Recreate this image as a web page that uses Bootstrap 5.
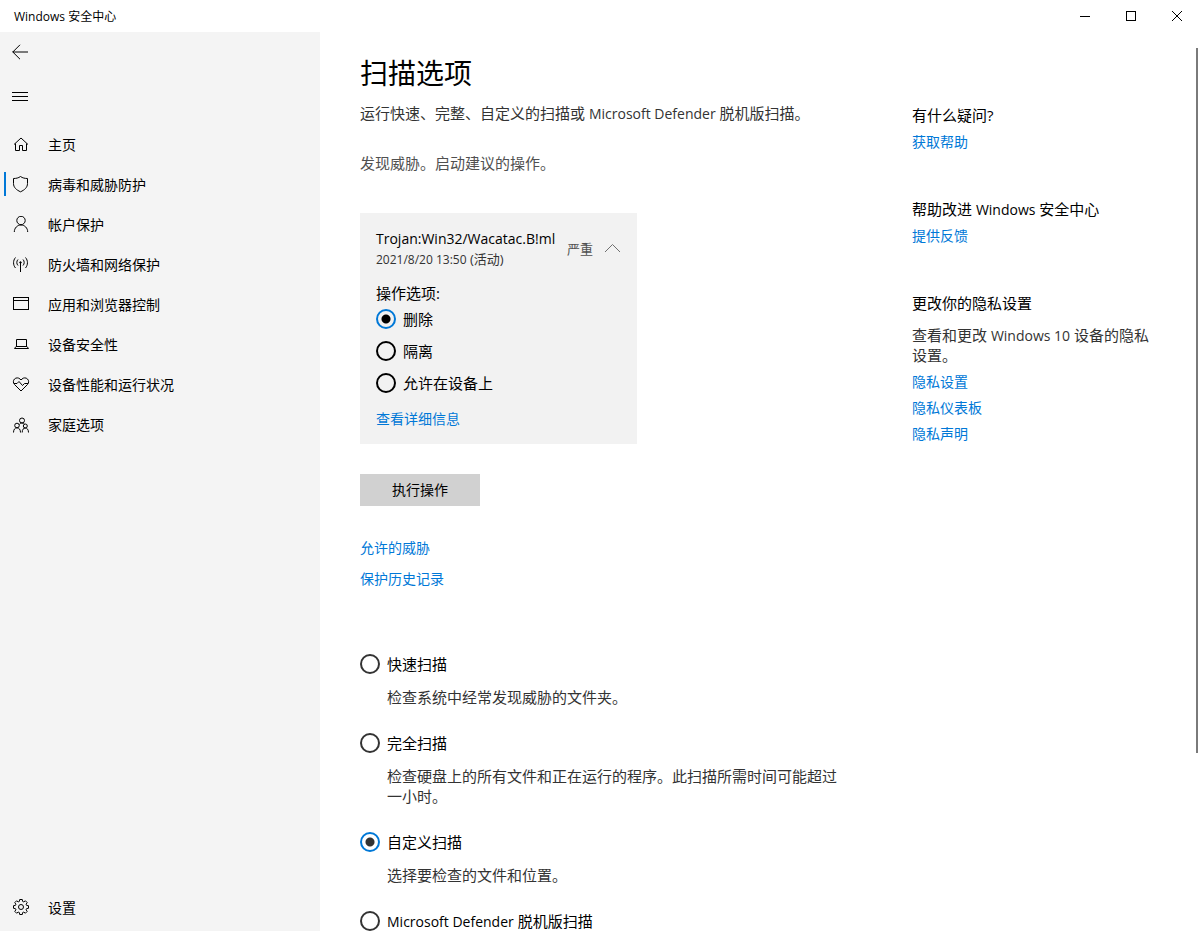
<!DOCTYPE html>
<html lang="zh-CN">
<head>
<meta charset="utf-8">
<meta name="viewport" content="width=device-width, initial-scale=1">
<title>Windows 安全中心</title>
<link rel="stylesheet" href="https://cdn.jsdelivr.net/npm/bootstrap@5.3.0/dist/css/bootstrap.min.css">
<style>
  body { font-family: "Open Sans", "Noto Sans CJK SC", sans-serif; font-size: 15px; line-height: 20px; color: #000; background: #fff; }
  a { color: #0078d7; text-decoration: none; font-size: 14px; }
  svg { fill: none; stroke: currentColor; stroke-width: 1; flex: none; }
  .latin { font-size: 14px; }
  span.latin { line-height: 1; }
  .titlebar { height: 32px; font-size: 12px; padding-left: 14px; }
  .titlebar span { padding-top: 2px; }
  .win-btn { width: 46px; height: 32px; border: 0; background: none; padding: 0; }
  .win-btn svg { display: block; margin: 0 auto; }
  .side { width: 320px; background: #f4f4f4; }
  .side nav { padding-top: 9px; }
  .tool-btn { width: 40px; height: 40px; border: 0; background: none; padding: 0 0 0 12px; display: flex; align-items: center; color: #000; }
  .side .nav-link { height: 40px; padding: 0 0 0 4px; color: #000; display: flex; align-items: center; font-size: 14px; }
  .side .nav-link::before { content: ""; width: 2px; height: 24px; margin-right: 6px; margin-top: -2px; }
  .side .nav-link.active::before { background: #0078d7; }
  .side .nav-link svg { margin-right: 18px; }
  .side .nav-link:last-child { margin-bottom: 3px; }
  .page { padding: 23px 40px 0; }
  .page h1 { font-size: 28px; line-height: 36px; font-weight: 400; }
  .page h2 { font-size: 15px; line-height: 20px; font-weight: 400; margin: 0; }
  .intro { max-width: 490px; }
  .found { margin: 30px 0 0; }
  .help { width: 248px; padding-top: 50px; }
  .help section { margin-bottom: 47px; }
  .help a { display: block; margin-top: 6px; }
  .help h2 + a, .help p + a { margin-top: 7px; }
  .soft { color: #333; }
  .softer { color: #505050; }
  .threat { width: 277px; padding: 16px 16px 15px; background: #f2f2f2; margin-top: 40px; }
  .threat svg { stroke: #707070; }
  .when { font-size: 13px; white-space: nowrap; }
  .when .latin { font-size: 12px; }
  .choose { margin: 14px 0 6px; }
  .form-check-input { width: 20px; height: 20px; margin: 0; border: 2px solid #333; background-color: transparent; flex: none; }
  .form-check-input:checked { background-color: transparent; border-color: #0078d7; background-image: radial-gradient(circle, #333 4px, transparent 5px); }
  .threat .form-check-input { border-color: #000; }
  .threat .form-check-input:checked { border-color: #0078d7; background-image: radial-gradient(circle, #000 4px, transparent 5px); }
  .pick { display: flex; align-items: center; gap: 7px; }
  .threat .pick + .pick { margin-top: 12px; }
  .run-btn { width: 120px; height: 32px; border-radius: 0; border: 0; background: #d1d1d1; font-size: 14px; line-height: 20px; padding: 0; margin-top: 30px; color: #000; }
  .more { gap: 11px; margin: 32px 0 65px; }
  .scan { margin-bottom: 26px; }
  .scan p { margin: 13px 0 0 27px; color: #333; }
  .thumb { top: 16px; right: 2px; width: 2px; height: 78.4%; background: #7a7a7a; }
</style>
</head>
<body>
<div class="d-flex flex-column vh-100 overflow-hidden">
  <header class="titlebar d-flex align-items-center">
    <span class="me-auto">Windows 安全中心</span>
    <button class="win-btn" aria-label="最小化"><svg width="12" height="12" shape-rendering="crispEdges"><path d="M1 6.5h10"/></svg></button>
    <button class="win-btn" aria-label="最大化"><svg width="12" height="12" shape-rendering="crispEdges"><path d="M1.5 1.5h9v9h-9z"/></svg></button>
    <button class="win-btn" aria-label="关闭"><svg width="12" height="12"><path d="M1 1l10 10M11 1L1 11"/></svg></button>
  </header>
  <div class="d-flex flex-grow-1 overflow-hidden">
    <aside class="side d-flex flex-column flex-shrink-0">
      <button class="tool-btn" aria-label="返回"><svg width="16" height="16"><path d="M0.5 8h15.5M8 0.8L0.8 8l7.2 7.2"/></svg></button>
      <button class="tool-btn mt-1" aria-label="菜单"><svg width="16" height="12" shape-rendering="crispEdges"><path d="M0 2.5h16M0 6.5h16M0 10.5h16"/></svg></button>
      <nav class="nav flex-column flex-nowrap flex-grow-1">
        <a class="nav-link" href="#"><svg width="18" height="18"><path d="M2 8.5L9 2l7 6.5M3.5 7.5v7h4v-5h3v5h4v-7"/></svg>主页</a>
        <a class="nav-link active" href="#"><svg width="18" height="18"><path d="M8.500 .5C6.500 2 4 2.500 1.500 2.500v5c0 4 3 6.500 7 8.300 4-1.800 7-4.300 7-8.300v-5C13 2.500 10.500 2 8.500.5z"/></svg>病毒和威胁防护</a>
        <a class="nav-link" href="#"><svg width="18" height="18"><circle cx="9" cy="4.500" r="4.200"/><path d="M2.300 16c0-4 3-7 6.700-7s6.700 3 6.700 7"/></svg>帐户保护</a>
        <a class="nav-link" href="#"><svg width="18" height="18"><path d="M8.500 6v10M6 3.500c-1.600 1.600-1.600 4.400 0 6M11 3.500c1.600 1.600 1.600 4.400 0 6M3.500 1.500c-2.600 3-2.600 7.500 0 10.500M13.500 1.500c2.600 3 2.600 7.500 0 10.500"/><circle cx="8.500" cy="6.500" r=".8"/></svg>防火墙和网络保护</a>
        <a class="nav-link" href="#"><svg width="18" height="18" shape-rendering="crispEdges"><path d="M1.500 1.500h15v12h-15zM1.500 4.500h15"/></svg>应用和浏览器控制</a>
        <a class="nav-link" href="#"><svg width="18" height="18"><path d="M4.500 10.500v-7h10v7M4 10.500h11l1.500 2h-14z"/></svg>设备安全性</a>
        <a class="nav-link" href="#"><svg width="18" height="18"><path d="M9 15L2.500 8.500C1 7 1 4.500 2.500 3s4-1.500 5.500 0l1 1 1-1c1.500-1.500 4-1.500 5.500 0s1.500 4 0 5.500zM2 7.500h3l2-2 3.500 4 2-2H16"/></svg>设备性能和运行状况</a>
        <a class="nav-link" href="#"><svg width="18" height="18"><circle cx="10" cy="4.500" r="2.500"/><circle cx="5" cy="9.500" r="2.300"/><circle cx="13.300" cy="10" r="2"/><path d="M1.500 16.500c0-3 1.500-4.700 3.500-4.700s3.500 1.700 3.500 4.700M10.200 16.500c0-3 1.300-4.500 3.100-4.500s3.200 1.500 3.200 4.500M7.300 8.500c.7-1 1.600-1.500 2.700-1.500s2 .5 2.500 1.200"/></svg>家庭选项</a>
        <a class="nav-link mt-auto" href="#"><svg width="18" height="18" viewBox="-9 -8 18 18"><path d="M7.500-1.300V1.300L5.600 1.600 5.100 2.800 6.200 4.400 4.400 6.200 2.800 5.100 1.600 5.600 1.300 7.500H-1.300L-1.600 5.600-2.800 5.100-4.400 6.200-6.200 4.400-5.100 2.800-5.600 1.600-7.500 1.300V-1.300L-5.600-1.600-5.100-2.800-6.200-4.400-4.400-6.200-2.800-5.100-1.600-5.600-1.300-7.500H1.300L1.600-5.600 2.800-5.100 4.400-6.200 6.200-4.400 5.100-2.800 5.600-1.600z"/><circle r="2.500"/></svg>设置</a>
      </nav>
    </aside>
    <main class="flex-grow-1 position-relative overflow-hidden">
      <div class="page d-flex justify-content-between">
        <div class="intro">
          <h1 class="m-0">扫描选项</h1>
          <p class="soft mb-0 mt-2 pt-1">运行快速、完整、自定义的扫描或 <span class="latin">Microsoft Defender</span> 脱机版扫描。</p>
          <p class="softer found">发现威胁。启动建议的操作。</p>
          <section class="threat">
            <div class="d-flex align-items-center">
              <div class="me-auto">
                <div class="latin">Trojan:Win32/Wacatac.B!ml</div>
                <div class="when soft"><span class="latin">2021/8/20 13:50</span> (活动)</div>
              </div>
              <span class="when softer">严重</span>
              <svg class="ms-2" width="20" height="12"><path d="M4 9l7.500-7.500L19 9"/></svg>
            </div>
            <div class="choose">操作选项:</div>
            <div class="pick"><input class="form-check-input" type="radio" name="act" id="a1" checked><label for="a1">删除</label></div>
            <div class="pick"><input class="form-check-input" type="radio" name="act" id="a2"><label for="a2">隔离</label></div>
            <div class="pick"><input class="form-check-input" type="radio" name="act" id="a3"><label for="a3">允许在设备上</label></div>
            <a class="d-block mt-3" href="#">查看详细信息</a>
          </section>
          <button class="btn run-btn">执行操作</button>
          <div class="more d-flex flex-column align-items-start">
            <a href="#">允许的威胁</a>
            <a href="#">保护历史记录</a>
          </div>
          <div class="scan"><div class="pick"><input class="form-check-input" type="radio" name="scan" id="s1"><label for="s1">快速扫描</label></div><p>检查系统中经常发现威胁的文件夹。</p></div>
          <div class="scan"><div class="pick"><input class="form-check-input" type="radio" name="scan" id="s2"><label for="s2">完全扫描</label></div><p>检查硬盘上的所有文件和正在运行的程序。此扫描所需时间可能超过一小时。</p></div>
          <div class="scan"><div class="pick"><input class="form-check-input" type="radio" name="scan" id="s3" checked><label for="s3">自定义扫描</label></div><p>选择要检查的文件和位置。</p></div>
          <div class="pick"><input class="form-check-input" type="radio" name="scan" id="s4"><label for="s4"><span class="latin">Microsoft Defender</span> 脱机版扫描</label></div>
        </div>
        <aside class="help flex-shrink-0">
          <section><h2>有什么疑问?</h2><a href="#">获取帮助</a></section>
          <section><h2>帮助改进 <span class="latin">Windows</span> 安全中心</h2><a href="#">提供反馈</a></section>
          <section><h2>更改你的隐私设置</h2><p class="soft mb-0 mt-2 pt-1">查看和更改 <span class="latin">Windows 10</span> 设备的隐私设置。</p><a href="#">隐私设置</a><a href="#">隐私仪表板</a><a href="#">隐私声明</a></section>
        </aside>
      </div>
      <div class="thumb position-absolute"></div>
    </main>
  </div>
</div>
<script src="https://cdn.jsdelivr.net/npm/bootstrap@5.3.0/dist/js/bootstrap.bundle.min.js"></script>
</body>
</html>
